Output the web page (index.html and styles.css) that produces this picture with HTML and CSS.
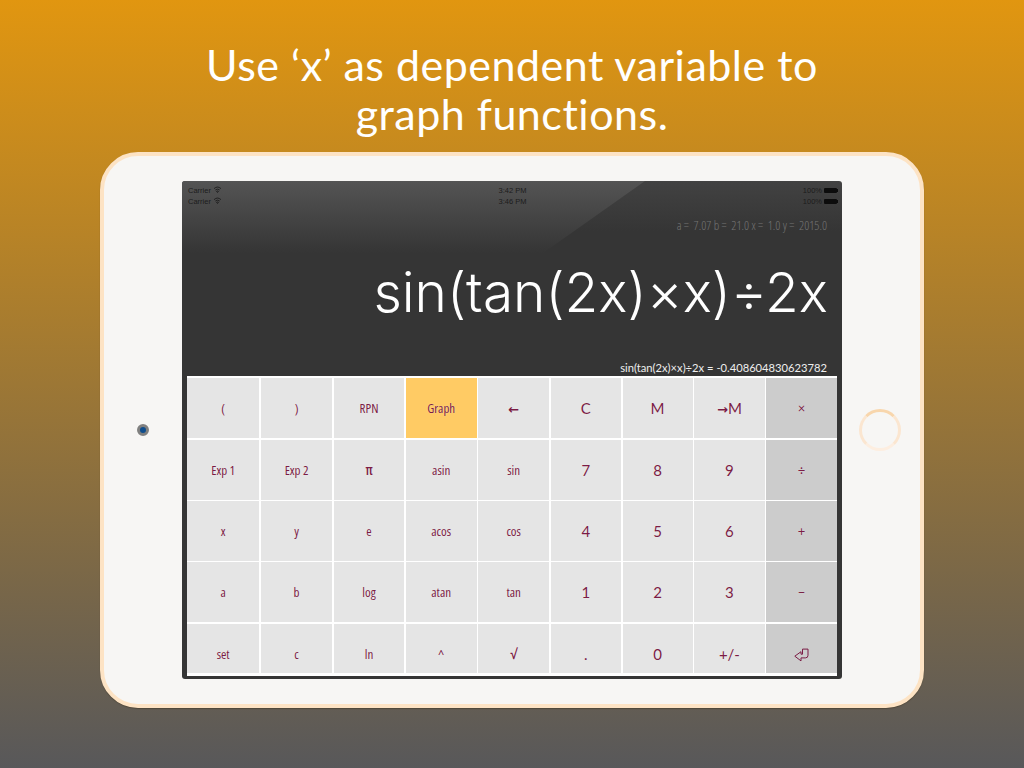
FILE: index.html
```html
<!DOCTYPE html>
<html lang="en">
<head>
  <meta charset="UTF-8">
  <title>Calculator graph functions</title>
  <link rel="stylesheet" href="styles.css">
</head>
<body>

  <h1 class="headline">Use ‘x’ as dependent variable to<br>graph functions.</h1>

  <div class="tablet">
    <div class="camera"></div>

    <div class="screen">
      <div class="glare"></div>

      <div class="status">
        <span class="carrier">Carrier
          <svg class="wifi" viewBox="0 0 10 8"><path d="M1 3a6 6 0 0 1 8 0M2.500 4.600a4 4 0 0 1 5 0M5 7.400 3.900 6.100a1.800 1.800 0 0 1 2.200 0z"/></svg>
        </span>
        <span class="clock">3:42 PM</span>
        <span class="power">100% <i class="battery"></i></span>
      </div>
      <div class="status">
        <span class="carrier">Carrier
          <svg class="wifi" viewBox="0 0 10 8"><path d="M1 3a6 6 0 0 1 8 0M2.500 4.600a4 4 0 0 1 5 0M5 7.400 3.900 6.100a1.800 1.800 0 0 1 2.200 0z"/></svg>
        </span>
        <span class="clock">3:46 PM</span>
        <span class="power">100% <i class="battery"></i></span>
      </div>

      <div class="vars">a = &nbsp;7.07 b = &nbsp;21.0 x = &nbsp;1.0 y = &nbsp;2015.0</div>
      <div class="expr">sin(tan(2x)×x)÷2x</div>
      <div class="result">sin(tan(2x)×x)÷2x = -0.408604830623782</div>

      <div class="keys">
        <div class="key">(</div>
        <div class="key">)</div>
        <div class="key">RPN</div>
        <div class="key active">Graph</div>
        <div class="key big"><span class="arrow">←</span></div>
        <div class="key big">C</div>
        <div class="key big">M</div>
        <div class="key big"><span class="arrow">→</span>M</div>
        <div class="key op">×</div>

        <div class="key">Exp 1</div>
        <div class="key">Exp 2</div>
        <div class="key pi">π</div>
        <div class="key">asin</div>
        <div class="key">sin</div>
        <div class="key big">7</div>
        <div class="key big">8</div>
        <div class="key big">9</div>
        <div class="key op">÷</div>

        <div class="key">x</div>
        <div class="key">y</div>
        <div class="key">e</div>
        <div class="key">acos</div>
        <div class="key">cos</div>
        <div class="key big">4</div>
        <div class="key big">5</div>
        <div class="key big">6</div>
        <div class="key op">+</div>

        <div class="key">a</div>
        <div class="key">b</div>
        <div class="key">log</div>
        <div class="key">atan</div>
        <div class="key">tan</div>
        <div class="key big">1</div>
        <div class="key big">2</div>
        <div class="key big">3</div>
        <div class="key op">−</div>

        <div class="key">set</div>
        <div class="key">c</div>
        <div class="key">ln</div>
        <div class="key">^</div>
        <div class="key pi">√</div>
        <div class="key big">.</div>
        <div class="key big">0</div>
        <div class="key big">+/-</div>
        <div class="key op">
          <svg class="enter" viewBox="0 0 15 13"><path d="M.8 7.700 7 3.200v2.500h1.500V.6H14v6.200a2.600 2.600 0 0 1-2.600 2.600H7v3z"/></svg>
        </div>
      </div>
    </div>

    <div class="home"></div>
  </div>

</body>
</html>
```

FILE: styles.css
```css
html, body {
  margin: 0;
  height: 768px;
  overflow: hidden;
}

body {
  background: linear-gradient(#e19610, #58585a);
  font-family: "Lato", "Liberation Sans", sans-serif;
  display: flex;
  flex-direction: column;
  align-items: center;
}

.headline {
  margin: 0;
  height: 152px;
  padding-top: 40px;
  box-sizing: border-box;
  color: #fff;
  font-size: 43px;
  font-weight: 400;
  line-height: 49px;
  letter-spacing: .5px;
  text-align: center;
}

.tablet {
  width: 824px;
  height: 556px;
  box-sizing: border-box;
  background: #f7f6f4;
  border: 4px solid #fde3c4;
  border-radius: 38px;
  box-shadow: 0 1px 1px rgba(60, 50, 30, .5);
  display: grid;
  grid-template-columns: 78px 660px 78px;
  align-items: center;
  justify-items: center;
}

.camera {
  width: 6px;
  height: 6px;
  border: 3px solid #80807f;
  border-radius: 50%;
  background: #0f4d8c;
}

.home {
  width: 36px;
  height: 36px;
  margin-right: 2px;
  border: 3px solid #fbe6d0;
  border-top-color: #f8d6ac;
  border-bottom-color: #fdeee0;
  border-radius: 50%;
}

.screen {
  position: relative;
  width: 660px;
  height: 498px;
  box-sizing: border-box;
  padding-top: 4px;
  background: linear-gradient(#424242, #353535 50px);
  border-radius: 3px;
  display: flex;
  flex-direction: column;
  overflow: hidden;
}

.glare {
  position: absolute;
  top: 0;
  left: 0;
  width: 463px;
  height: 72px;
  background: linear-gradient(#545454, #353535);
  clip-path: polygon(0 0, 100% 0, 78% 100%, 0 100%);
}

.status {
  position: relative;
  height: 11px;
  padding: 0 5px 0 6px;
  display: grid;
  grid-template-columns: 1fr auto 1fr;
  align-items: center;
  color: #1c1c1c;
  font-family: "Liberation Sans", sans-serif;
  font-size: 7.500px;
  line-height: 11px;
}

.wifi {
  width: 9px;
  height: 7px;
  fill: none;
  stroke: #1c1c1c;
  stroke-width: 1;
  vertical-align: 0;
}

.power {
  justify-self: end;
  display: flex;
  align-items: center;
  gap: 2px;
}

.battery {
  width: 13px;
  height: 5px;
  background: #0c0c0c;
  border-radius: 1px;
  box-shadow: 1px 0 0 -1px #0c0c0c, 2px 0 0 -1px #0c0c0c;
}

.vars {
  position: relative;
  margin-top: 12px;
  padding-right: 15px;
  color: #747474;
  font-family: "Open Sans", sans-serif;
  font-stretch: 75%;
  font-weight: 300;
  font-size: 12.500px;
  line-height: 14px;
  text-align: right;
}

.expr {
  position: relative;
  margin-top: 24px;
  padding-right: 14px;
  color: #fff;
  font-family: "Inter", "Lato", sans-serif;
  font-size: 55px;
  font-weight: 300;
  line-height: 70px;
  text-align: right;
  white-space: nowrap;
}

.result {
  margin-top: 34px;
  padding-right: 15px;
  color: #eee;
  font-size: 11.200px;
  line-height: 14px;
  text-align: right;
}

.keys {
  margin: 1px 5px 0;
  height: 300px;
  padding: 2px 0 0 0;
  box-sizing: border-box;
  background: #fff;
  display: grid;
  grid-template-columns: 72.3px 71.6px 70.3px 71px 71px 70.4px 70px 70.700px 70.700px;
  grid-template-rows: 60px 60px 59.500px 60px 49px;
  gap: 1.500px;
  overflow: hidden;
}

.key {
  background: #e5e5e5;
  color: #7b1c45;
  font-family: "Open Sans", sans-serif;
  font-stretch: 75%;
  font-size: 13px;
  line-height: 60px;
  text-align: center;
  text-shadow: 0 0 1px rgba(255, 255, 255, .6);
}

.big {
  font-family: "Lato", sans-serif;
  font-stretch: normal;
  font-size: 15px;
}

.pi {
  font-weight: 600;
  font-size: 14px;
}

.arrow {
  font-family: "DejaVu Sans", sans-serif;
  font-size: 13px;
  font-weight: 700;
}

.active {
  background: #ffcb64;
}

.op {
  background: #ccc;
  font-family: "Lato", sans-serif;
  font-stretch: normal;
  font-size: 13px;
}

.enter {
  width: 15px;
  height: 14px;
  fill: none;
  stroke: #7b1c45;
  stroke-width: 1;
  vertical-align: -3px;
}
```
